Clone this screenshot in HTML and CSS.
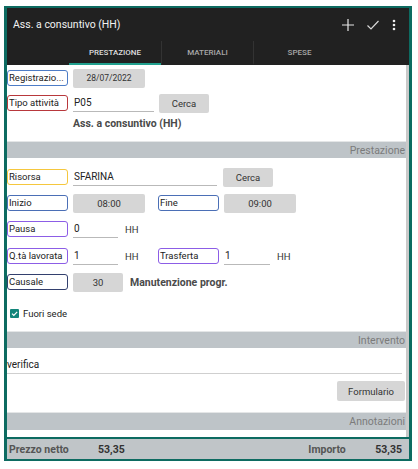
FILE: index.html
```html
<!DOCTYPE html>
<html lang="it">
<head>
<meta charset="utf-8">
<title>Ass. a consuntivo (HH)</title>
<link rel="stylesheet" href="styles.css">
</head>
<body>
<div class="frame">
  <header class="appbar">
    <div class="titlerow">
      <span class="title">Ass. a consuntivo (HH)</span>
      <div class="actions">
        <svg class="ic plus" width="14" height="14" viewBox="0 0 14 14"><path d="M7 1v12M1 7h12" stroke="#e6e6e6" stroke-width="1.2" fill="none"/></svg>
        <svg class="ic check" width="14" height="14" viewBox="0 0 14 14"><path d="M1.5 7.5l3.5 3.5 7.5-8" stroke="#d8d8d8" stroke-width="1.2" fill="none"/></svg>
        <svg class="ic dots" width="4" height="12" viewBox="0 0 4 12"><circle cx="2" cy="2" r="1.3" fill="#eee"/><circle cx="2" cy="6" r="1.3" fill="#eee"/><circle cx="2" cy="10" r="1.3" fill="#eee"/></svg>
      </div>
    </div>
    <nav class="tabs">
      <div class="tab active">PRESTAZIONE</div>
      <div class="tab">MATERIALI</div>
      <div class="tab">SPESE</div>
    </nav>
  </header>
  <main class="content">
    <div class="row r1">
      <span class="lbl blue">Registrazio...</span>
      <span class="btn w72 small">28/07/2022</span>
    </div>
    <div class="row r2">
      <span class="lbl red">Tipo attività</span>
      <span class="inp w81">P05</span>
      <span class="btn w50 ml5">Cerca</span>
    </div>
    <div class="row r3">
      <span class="desc">Ass. a consuntivo (HH)</span>
    </div>
    <div class="band b1">Prestazione</div>
    <div class="row r4">
      <span class="lbl yellow">Risorsa</span>
      <span class="inp w144">SFARINA</span>
      <span class="btn w50 ml6">Cerca</span>
    </div>
    <div class="row r5">
      <span class="lbl blue2">Inizio</span>
      <span class="btn w72">08:00</span>
      <span class="lbl blue2 ml13">Fine</span>
      <span class="btn w72">09:00</span>
    </div>
    <div class="row r6">
      <span class="lbl purple">Pausa</span>
      <span class="inp w45">0</span>
      <span class="unit">HH</span>
    </div>
    <div class="row r7">
      <span class="lbl purple">Q.tà lavorata</span>
      <span class="inp w45">1</span>
      <span class="unit">HH</span>
      <span class="lbl purple">Trasferta</span>
      <span class="inp w46">1</span>
      <span class="unit">HH</span>
    </div>
    <div class="row r8">
      <span class="lbl navy">Causale</span>
      <span class="btn w50">30</span>
      <span class="desc2">Manutenzione progr.</span>
    </div>
    <div class="row r9">
      <span class="chk"><svg width="9" height="9" viewBox="0 0 9 9"><path d="M2 4.6l1.8 1.8 3.4-3.6" stroke="#fff" stroke-width="1.2" fill="none"/></svg></span>
      <span class="chklbl">Fuori sede</span>
    </div>
    <div class="band b2">Intervento</div>
    <div class="textline">verifica</div>
    <div class="rowright">
      <span class="btn form">Formulario</span>
    </div>
    <div class="band b3">Annotazioni</div>
    <div class="notes"></div>
  </main>
  <footer class="footer">
    <span class="fl first">Prezzo netto</span>
    <span class="fv">53,35</span>
    <span class="spacer"></span>
    <span class="fl second">Importo</span>
    <span class="fv">53,35</span>
  </footer>
</div>
</body>
</html>
```
FILE: styles.css
```css
* { box-sizing: border-box; }
html, body { margin: 0; padding: 0; background: #fff; }
body { font-family: Roboto, "Noto Sans", sans-serif; color: #222; }

.frame {
  width: 408px;
  margin: 6px 0 0 4px;
  border: 3px solid #0d6b61;
  border-top-width: 2px;
  border-bottom-width: 2px;
  background: #fff;
}

.appbar { background: #212121; }
.titlerow {
  height: 33px;
  display: flex;
  align-items: center;
  padding-left: 6px;
}
.title { color: #f2f2f2; font-size: 10.5px; flex: 1; }
.actions { display: flex; align-items: center; }
.ic { display: block; }
.actions .plus { margin-right: 11px; }
.actions .check { margin-right: 12px; }
.actions .dots { margin-right: 13px; }

.tabs {
  height: 24px;
  display: flex;
  justify-content: center;
  padding-right: 2px;
}
.tab {
  width: 92px;
  display: flex;
  align-items: center;
  justify-content: center;
  font-size: 8px;
  font-weight: 500;
  color: #a8a8a8;
  border-bottom: 2px solid transparent;
}
.tab + .tab { border-left: 1px solid #333; }
.tab.active { color: #dedede; border-bottom-color: #21a08e; }

.content {
  border-right: 3px solid #c9c9c9;
  display: flex;
  flex-direction: column;
}

.row { display: flex; align-items: center; height: 20px; }
.r1 { margin-top: 3px; }
.r2 { margin-top: 5px; }
.r3 { margin-top: 0; }
.r4 { margin-top: 9px; }
.r5 { margin-top: 6px; }
.r6 { margin-top: 6px; }
.r7 { margin-top: 7px; }
.r8 { margin-top: 6px; }
.r9 { margin-top: 11px; }

.lbl {
  width: 61px;
  height: 16px;
  border: 1px solid #4a78c2;
  border-radius: 3px;
  font-size: 9.5px;
  line-height: 14px;
  padding-left: 1px;
  color: #222;
  white-space: nowrap;
  overflow: hidden;
  margin-right: 5px;
}
.blue { border-color: #4d7cc6; }
.blue2 { border-color: #4b6fb6; }
.red { border-color: #b8383c; }
.yellow { border-color: #f5c73e; }
.purple { border-color: #8c5de6; }
.navy { border-color: #33406e; }

.btn {
  height: 19px;
  background: #d6d6d6;
  border-radius: 2px;
  font-size: 9.5px;
  color: #333;
  display: flex;
  align-items: center;
  justify-content: center;
}
.btn.small { font-size: 8.5px; }
.w72 { width: 72px; }
.w50 { width: 50px; }

.inp {
  height: 18px;
  border-bottom: 1px solid #b9b9b9;
  font-size: 10px;
  line-height: 18px;
  padding-left: 1px;
  color: #222;
}
.w81 { width: 81px; }
.w144 { width: 144px; }
.w45 { width: 45px; }
.w46 { width: 46px; }

.ml5 { margin-left: 5px; }
.ml6 { margin-left: 6px; }
.ml13 { margin-left: 13px; }

.unit { width: 40px; padding-left: 7px; font-size: 9.5px; color: #333; }

.desc { font-size: 10.5px; font-weight: 700; color: #4a4a4a; padding-left: 66px; }
.desc2 { font-size: 10.5px; font-weight: 700; color: #4a4a4a; margin-left: 7px; }

.band {
  height: 17px;
  background: #bec4c8;
  color: #7b7b7b;
  font-size: 10.5px;
  text-align: right;
  line-height: 17px;
  padding-right: 1px;
  border-top: 1px solid #e4e6e7;
}
.b1 { margin-top: 8px; }
.b2 { margin-top: 8px; }
.b3 { margin-top: 11px; height: 18px; line-height: 18px; }

.chk {
  width: 9px;
  height: 9px;
  margin-left: 3px;
  background: #12857a;
  border-radius: 1px;
  display: flex;
}
.chklbl { font-size: 9.5px; margin-left: 4px; color: #222; }

.textline {
  margin-top: 9px;
  height: 17px;
  line-height: 16px;
  font-size: 10px;
  color: #222;
  border-bottom: 1px solid #cfcfcf;
  margin-right: 4px;
}
.rowright { display: flex; justify-content: flex-end; margin-top: 7px; padding-right: 1px; }
.form { width: 68px; height: 20px; }

.notes { height: 7px; }

.footer {
  height: 22px;
  border-top: 2px solid #0d6b61;
  background: #c0c5c8;
  display: flex;
  align-items: center;
  padding: 0 7px 0 2px;
  font-size: 10.5px;
  font-weight: 700;
  color: #444;
}
.fl { color: #555; }
.fl.first { width: 89px; }
.fl.second { width: 67px; }
.fv { color: #333; }
.spacer { flex: 1; }
```
